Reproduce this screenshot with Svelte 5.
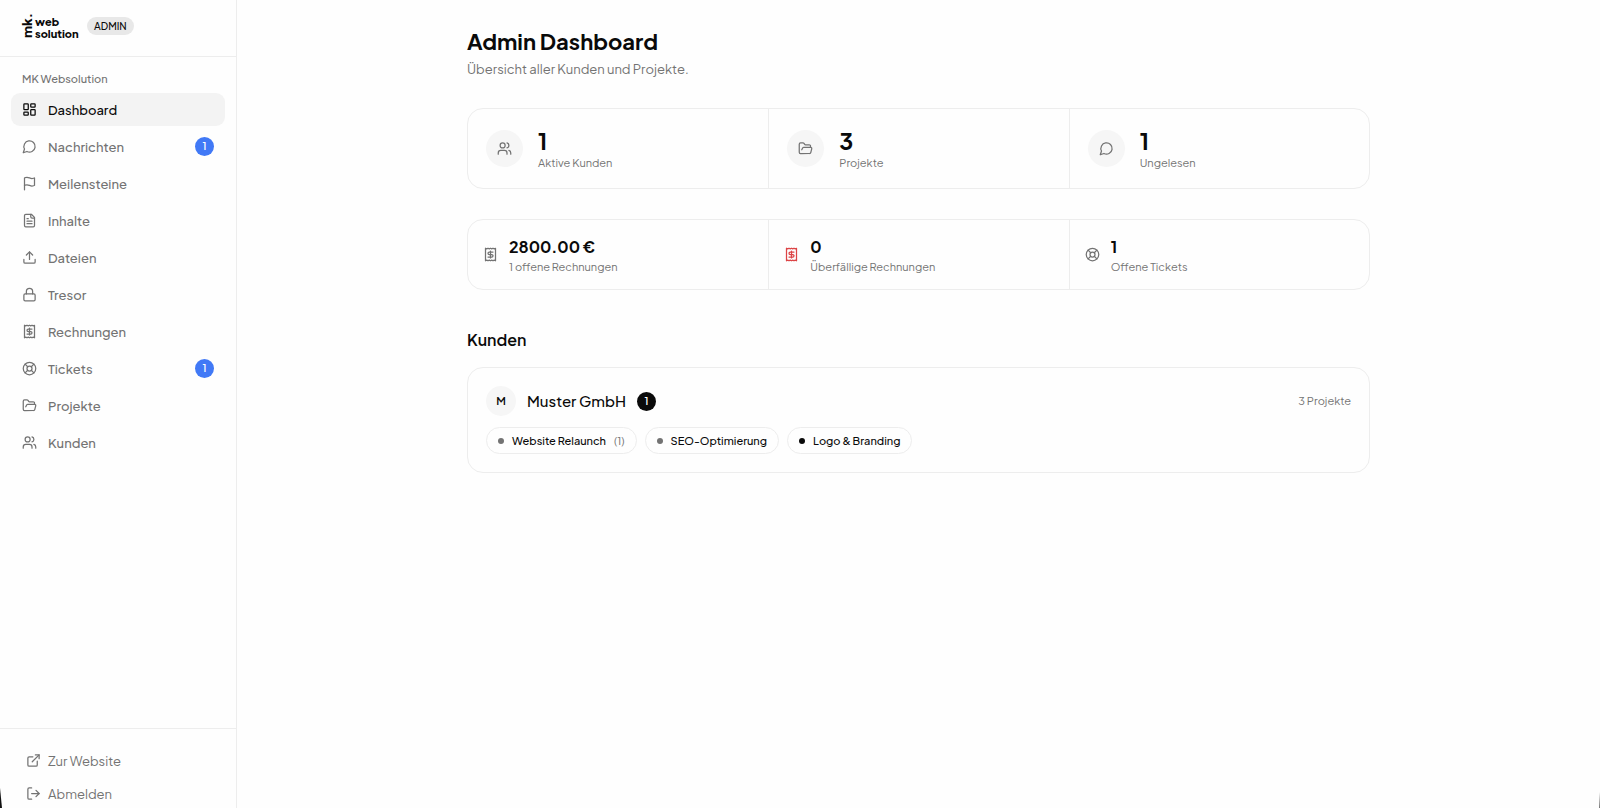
<script>
  const icons = {
    dashboard:
      '<rect width="7" height="9" x="3" y="3" rx="1"/><rect width="7" height="5" x="14" y="3" rx="1"/><rect width="7" height="9" x="14" y="12" rx="1"/><rect width="7" height="5" x="3" y="16" rx="1"/>',
    message: '<path d="M7.9 20A9 9 0 1 0 4 16.1L2 22Z"/>',
    flag: '<path d="M4 15s1-1 4-1 5 2 8 2 4-1 4-1V3s-1 1-4 1-5-2-8-2-4 1-4 1z"/><path d="M4 22v-7"/>',
    file: '<path d="M15 2H6a2 2 0 0 0-2 2v16a2 2 0 0 0 2 2h12a2 2 0 0 0 2-2V7Z"/><path d="M14 2v4a2 2 0 0 0 2 2h4"/><path d="M10 9H8"/><path d="M16 13H8"/><path d="M16 17H8"/>',
    upload: '<path d="M21 15v4a2 2 0 0 1-2 2H5a2 2 0 0 1-2-2v-4"/><path d="m17 8-5-5-5 5"/><path d="M12 3v12"/>',
    lock: '<rect width="18" height="11" x="3" y="11" rx="2"/><path d="M7 11V7a5 5 0 0 1 10 0v4"/>',
    receipt:
      '<path d="M4 2v20l2-1 2 1 2-1 2 1 2-1 2 1 2-1 2 1V2l-2 1-2-1-2 1-2-1-2 1-2-1-2 1Z"/><path d="M16 8h-6a2 2 0 1 0 0 4h4a2 2 0 1 1 0 4H8"/><path d="M12 17.5v-11"/>',
    buoy: '<circle cx="12" cy="12" r="10"/><path d="m4.93 4.93 4.24 4.24"/><path d="m14.83 9.17 4.24-4.24"/><path d="m14.83 14.83 4.24 4.24"/><path d="m9.17 14.83-4.24 4.24"/><circle cx="12" cy="12" r="4"/>',
    folder:
      '<path d="m6 14 1.5-2.9A2 2 0 0 1 9.24 10H20a2 2 0 0 1 1.94 2.5l-1.54 6a2 2 0 0 1-1.95 1.5H4a2 2 0 0 1-2-2V5a2 2 0 0 1 2-2h3.9a2 2 0 0 1 1.69.9l.81 1.2a2 2 0 0 0 1.67.9H18a2 2 0 0 1 2 2v2"/>',
    users:
      '<path d="M16 21v-2a4 4 0 0 0-4-4H6a4 4 0 0 0-4 4v2"/><circle cx="9" cy="7" r="4"/><path d="M22 21v-2a4 4 0 0 0-3-3.87"/><path d="M16 3.13a4 4 0 0 1 0 7.75"/>',
    external: '<path d="M15 3h6v6"/><path d="M10 14 21 3"/><path d="M18 13v6a2 2 0 0 1-2 2H5a2 2 0 0 1-2-2V8a2 2 0 0 1 2-2h6"/>',
    logout: '<path d="M9 21H5a2 2 0 0 1-2-2V5a2 2 0 0 1 2-2h4"/><path d="m16 17 5-5-5-5"/><path d="M21 12H9"/>'
  };

  const nav = [
    { label: 'Dashboard', icon: 'dashboard', active: true },
    { label: 'Nachrichten', icon: 'message', count: 1 },
    { label: 'Meilensteine', icon: 'flag' },
    { label: 'Inhalte', icon: 'file' },
    { label: 'Dateien', icon: 'upload' },
    { label: 'Tresor', icon: 'lock' },
    { label: 'Rechnungen', icon: 'receipt' },
    { label: 'Tickets', icon: 'buoy', count: 1 },
    { label: 'Projekte', icon: 'folder' },
    { label: 'Kunden', icon: 'users' }
  ];

  const stats = [
    { value: '1', label: 'Aktive Kunden', icon: 'users' },
    { value: '3', label: 'Projekte', icon: 'folder' },
    { value: '1', label: 'Ungelesen', icon: 'message' }
  ];

  const finance = [
    { value: '2800.00 €', label: '1 offene Rechnungen', icon: 'receipt' },
    { value: '0', label: 'Überfällige Rechnungen', icon: 'receipt', alert: true },
    { value: '1', label: 'Offene Tickets', icon: 'buoy' }
  ];

  const projects = [
    { name: 'Website Relaunch', unread: 1 },
    { name: 'SEO-Optimierung' },
    { name: 'Logo & Branding', dark: true }
  ];
</script>

{#snippet icon(name)}
  <svg class="icon" viewBox="0 0 24 24" aria-hidden="true">{@html icons[name]}</svg>
{/snippet}

<div class="shell">
  <aside class="sidebar">
    <div class="brand">
      <svg class="logo" viewBox="0 0 58 26" role="img" aria-label="mk. web solution">
        <text class="mark" transform="translate(10 25) rotate(-90)">mk.</text>
        <text class="word" x="13" y="13">web</text>
        <text class="word" x="13" y="25">solution</text>
      </svg>
      <span class="role">ADMIN</span>
    </div>

    <nav class="nav" aria-label="Hauptnavigation">
      <p class="group">MK Websolution</p>
      {#each nav as item}
        <a class="link" class:active={item.active} href="#{item.icon}">
          {@render icon(item.icon)}
          <span class="text">{item.label}</span>
          {#if item.count}<span class="badge">{item.count}</span>{/if}
        </a>
      {/each}
    </nav>

    <div class="foot">
      <a class="link" href="#website">{@render icon('external')}<span class="text">Zur Website</span></a>
      <button class="link" type="button">{@render icon('logout')}<span class="text">Abmelden</span></button>
    </div>
  </aside>

  <main class="main">
    <div class="content">
      <h1>Admin Dashboard</h1>
      <p class="sub">Übersicht aller Kunden und Projekte.</p>

      <section class="panel stats">
        {#each stats as s}
          <div class="cell">
            <span class="disc">{@render icon(s.icon)}</span>
            <div>
              <div class="value">{s.value}</div>
              <div class="label">{s.label}</div>
            </div>
          </div>
        {/each}
      </section>

      <section class="panel finance">
        {#each finance as s}
          <div class="cell" class:alert={s.alert}>
            {@render icon(s.icon)}
            <div>
              <div class="value">{s.value}</div>
              <div class="label">{s.label}</div>
            </div>
          </div>
        {/each}
      </section>

      <h2>Kunden</h2>
      <section class="panel client">
        <div class="client-head">
          <span class="avatar">M</span>
          <h3>Muster GmbH</h3>
          <span class="badge black">1</span>
          <span class="label total">3 Projekte</span>
        </div>
        <div class="pills">
          {#each projects as p}
            <a class="pill" href="#projekt">
              <span class="dot" class:dark={p.dark}></span>
              <span>{p.name}</span>
              {#if p.unread}<span class="unread">({p.unread})</span>{/if}
            </a>
          {/each}
        </div>
      </section>
    </div>
  </main>
  <span class="corner left"></span>
  <span class="corner right"></span>
</div>

<style>
  :global(body) {
    margin: 0;
    background: #fefefe;
  }
  .shell {
    --ink: #0a0a0a;
    --muted: #737373;
    --line: #ededed;
    position: relative;
    display: flex;
    min-height: 100vh;
    overflow: hidden;
    color: var(--ink);
    font-family: 'Plus Jakarta Sans', Inter, sans-serif;
    font-size: 13px;
    line-height: 18px;
  }
  .shell :global(*) {
    box-sizing: border-box;
  }
  h1,
  h2,
  h3,
  p {
    margin: 0;
  }
  .icon {
    flex: none;
    width: 15px;
    height: 15px;
    fill: none;
    stroke: currentColor;
    stroke-width: 2;
    stroke-linecap: round;
    stroke-linejoin: round;
  }

  .sidebar {
    display: flex;
    flex: none;
    flex-direction: column;
    width: 237px;
    border-right: 1px solid var(--line);
  }
  .brand {
    display: flex;
    align-items: center;
    gap: 7px;
    height: 57px;
    padding: 0 22px 4px;
    border-bottom: 1px solid var(--line);
  }
  .logo {
    width: 58px;
    height: 26px;
    overflow: visible;
    fill: var(--ink);
    font-weight: 800;
  }
  .mark {
    font-size: 13px;
  }
  .word {
    font-size: 11px;
  }
  .role {
    padding: 0 7px;
    border-radius: 9px;
    background: #e8e8e8;
    font-size: 10px;
    font-weight: 500;
    line-height: 18px;
  }
  .nav {
    display: flex;
    flex: 1;
    flex-direction: column;
    gap: 4px;
    padding: 12px 11px;
  }
  .group {
    padding: 0 11px;
    color: var(--muted);
    font-size: 11px;
    font-weight: 500;
    line-height: 20px;
  }
  .link {
    display: flex;
    align-items: center;
    gap: 11px;
    height: 33px;
    padding: 0 11px;
    border: 0;
    border-radius: 9px;
    background: none;
    color: var(--muted);
    font: inherit;
    font-weight: 500;
    text-align: left;
    text-decoration: none;
  }
  .link.active {
    background: #f3f3f3;
    color: var(--ink);
  }
  .text {
    flex: 1;
  }
  .badge {
    width: 19px;
    height: 19px;
    border-radius: 50%;
    background: #4179f6;
    color: #fff;
    font-size: 10px;
    font-weight: 600;
    line-height: 19px;
    text-align: center;
  }
  .badge.black {
    background: var(--ink);
  }
  .foot {
    display: flex;
    flex-direction: column;
    height: 80px;
    padding: 15px 15px 0;
    border-top: 1px solid var(--line);
  }
  .foot .link {
    flex: none;
    gap: 7px;
    font-weight: 400;
  }

  .main {
    flex: 1;
    min-width: 0;
    padding: 26px 32px;
  }
  .content {
    max-width: 903px;
    margin: 0 auto;
  }
  h1 {
    font-size: 22px;
    font-weight: 700;
    line-height: 30px;
  }
  .sub {
    color: var(--muted);
    line-height: 26px;
  }
  .panel {
    border: 1px solid var(--line);
    border-radius: 16px;
  }
  .stats,
  .finance {
    display: grid;
    grid-template-columns: repeat(3, 1fr);
  }
  .stats {
    margin-top: 26px;
  }
  .finance {
    margin-top: 30px;
  }
  .cell {
    display: flex;
    align-items: center;
  }
  .cell + .cell {
    border-left: 1px solid var(--line);
  }
  .stats .cell {
    gap: 15px;
    height: 79px;
    padding: 0 18px;
  }
  .finance .cell {
    gap: 11px;
    height: 69px;
    padding: 0 15px;
  }
  .finance .icon {
    color: var(--muted);
  }
  .finance .alert .icon {
    color: #dc4446;
  }
  .disc {
    display: grid;
    place-items: center;
    width: 37px;
    height: 37px;
    border-radius: 50%;
    background: #f6f6f6;
    color: var(--muted);
  }
  .value {
    font-size: 23px;
    font-weight: 700;
    line-height: 28px;
  }
  .finance .value {
    font-size: 16px;
    line-height: 24px;
  }
  .label {
    color: var(--muted);
    font-size: 11px;
    line-height: 16px;
  }
  h2 {
    margin-top: 37px;
    font-size: 16px;
    font-weight: 600;
    line-height: 26px;
  }
  .client {
    margin-top: 14px;
    padding: 18px;
  }
  .client-head {
    display: flex;
    align-items: center;
    gap: 11px;
  }
  .avatar {
    width: 30px;
    height: 30px;
    border-radius: 50%;
    background: #f6f6f6;
    font-size: 11px;
    font-weight: 600;
    line-height: 30px;
    text-align: center;
  }
  h3 {
    font-size: 15px;
    font-weight: 500;
  }
  .total {
    margin-left: auto;
  }
  .pills {
    display: flex;
    flex-wrap: wrap;
    gap: 8px;
    margin-top: 11px;
  }
  .pill {
    display: flex;
    align-items: center;
    gap: 8px;
    height: 27px;
    padding: 0 11px;
    border: 1px solid var(--line);
    border-radius: 14px;
    color: var(--ink);
    font-size: 11px;
    font-weight: 500;
    text-decoration: none;
  }
  .dot {
    width: 6px;
    height: 6px;
    border-radius: 50%;
    background: var(--muted);
  }
  .dot.dark {
    background: var(--ink);
  }
  .unread {
    color: var(--muted);
    font-weight: 400;
  }

  .corner {
    position: absolute;
    bottom: 0;
    width: 2px;
    height: 20px;
    background: #111;
  }
  .corner.left {
    left: 0;
    clip-path: polygon(0 0, 100% 100%, 0 100%);
  }
  .corner.right {
    right: 0;
    width: 1px;
    height: 16px;
    background: linear-gradient(#fefefe, #777);
  }
</style>
